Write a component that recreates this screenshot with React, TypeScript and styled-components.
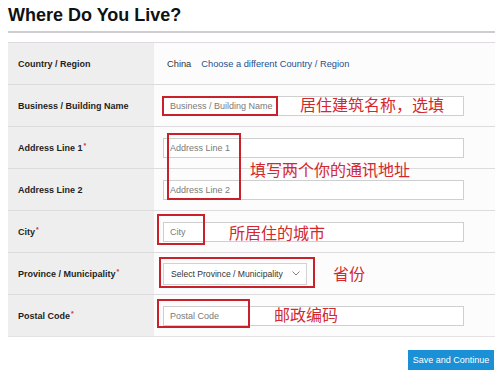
import React from 'react'
import styled, { createGlobalStyle } from 'styled-components'

const GlobalStyle = createGlobalStyle`
  html, body {
    margin: 0;
    padding: 0;
    background: #ffffff;
  }
  body {
    font-family: 'Liberation Sans', Arial, sans-serif;
    color: #222;
  }
`

const Page = styled.div`
  position: relative;
  width: 487px;
  height: 373px;
  padding-left: 8px;
  overflow: hidden;
`
const Title = styled.h1`
  margin: 4px 0 0;
  padding-bottom: 5px;
  font-size: 18px;
  line-height: 22px;
  font-weight: 700;
  color: #111;
  border-bottom: 2px solid #cfcdcf;
`
const Table = styled.div`
  margin-top: 9px;
  display: flex;
  flex-direction: column;
  border-bottom: 1px solid #e4e2e4;
`
const Row = styled.div`
  display: grid;
  grid-template-columns: 146px 1fr;
  height: 42px;
  border-top: 1px solid #dddbdd;
  box-sizing: border-box;
`
const LabelCell = styled.div`
  background: #efeeef;
  display: flex;
  align-items: center;
  padding-left: 10px;
  font-size: 9px;
  font-weight: 700;
  color: #1e1e1e;
`
const Req = styled.span`
  color: #d0363b;
  font-size: 7px;
  align-self: flex-start;
  margin-top: 15px;
  margin-left: 1px;
`
const ValueCell = styled.div<{ $pad?: number }>`
  background: #fdfcfd;
  display: flex;
  align-items: center;
  gap: 10px;
  padding-left: ${(p) => p.$pad ?? 9}px;
  font-size: 9.3px;
`
const Plain = styled.span`
  color: #333;
`
const Link = styled.a`
  color: #24508f;
  text-decoration: none;
`
const Field = styled.input`
  box-sizing: border-box;
  width: 301px;
  height: 20px;
  border: 1px solid #cfcfcf;
  background: #fff;
  padding: 0 6px;
  font-family: 'Liberation Sans', Arial, sans-serif;
  font-size: 9px;
  color: #333;
  outline: none;

  &::placeholder {
    color: #7a7a7a;
  }
`
const SelectBox = styled.div`
  box-sizing: border-box;
  width: 144px;
  height: 22px;
  border: 1px solid #d2d2d2;
  background: #fff;
  display: flex;
  align-items: center;
  justify-content: space-between;
  padding: 0 6px 0 7px;
  font-size: 8.6px;
  color: #333;
  white-space: nowrap;
`
const Footer = styled.div`
  display: flex;
  justify-content: flex-end;
  padding-top: 13px;
  padding-right: 1px;
`
const SaveButton = styled.button`
  height: 20px;
  width: 86px;
  border: none;
  background: #1a90d6;
  color: #fff;
  font-family: 'Liberation Sans', Arial, sans-serif;
  font-size: 9px;
  padding: 0;
`
const Mark = styled.div<{ $x: number; $y: number; $w: number; $h: number }>`
  position: absolute;
  left: ${(p) => p.$x}px;
  top: ${(p) => p.$y}px;
  width: ${(p) => p.$w}px;
  height: ${(p) => p.$h}px;
  box-sizing: border-box;
  border: 2px solid #c9202a;
  pointer-events: none;
`
const Note = styled.div<{ $x: number; $y: number }>`
  position: absolute;
  left: ${(p) => p.$x}px;
  top: ${(p) => p.$y}px;
  font-family: 'Noto Sans CJK SC', sans-serif;
  font-size: 16px;
  line-height: 18px;
  color: #d4282f;
  white-space: nowrap;
  pointer-events: none;
`

const marks = [
  { x: 162, y: 96, w: 116, h: 20 },
  { x: 167, y: 133, w: 74, h: 67 },
  { x: 157, y: 214, w: 48, h: 31 },
  { x: 159, y: 257, w: 156, h: 31 },
  { x: 157, y: 299, w: 93, h: 29 },
]

const notes = [
  { x: 300, y: 95, text: '居住建筑名称，选填' },
  { x: 250, y: 160, text: '填写两个你的通讯地址' },
  { x: 229, y: 223, text: '所居住的城市' },
  { x: 333, y: 264, text: '省份' },
  { x: 274, y: 305, text: '邮政编码' },
]

const Chevron = () => (
  <svg width='8' height='5' viewBox='0 0 8 5'>
    <path d='M0.5 0.5 L4 4 L7.5 0.5' fill='none' stroke='#777' strokeWidth='0.9' />
  </svg>
)

const Label = ({ text, required }: { text: string; required?: boolean }) => (
  <LabelCell>
    {text}
    {required && <Req>*</Req>}
  </LabelCell>
)

export default function App() {
  return (
    <>
      <GlobalStyle />
      <Page>
        <Title>Where Do You Live?</Title>
        <Table>
          <Row>
            <Label text='Country / Region' />
            <ValueCell $pad={13}>
              <Plain>China</Plain>
              <Link>Choose a different Country / Region</Link>
            </ValueCell>
          </Row>
          <Row>
            <Label text='Business / Building Name' />
            <ValueCell>
              <Field placeholder='Business / Building Name' />
            </ValueCell>
          </Row>
          <Row>
            <Label text='Address Line 1' required />
            <ValueCell>
              <Field placeholder='Address Line 1' />
            </ValueCell>
          </Row>
          <Row>
            <Label text='Address Line 2' />
            <ValueCell>
              <Field placeholder='Address Line 2' />
            </ValueCell>
          </Row>
          <Row>
            <Label text='City' required />
            <ValueCell>
              <Field placeholder='City' />
            </ValueCell>
          </Row>
          <Row>
            <Label text='Province / Municipality' required />
            <ValueCell>
              <SelectBox>
                <span>Select Province / Municipality</span>
                <Chevron />
              </SelectBox>
            </ValueCell>
          </Row>
          <Row>
            <Label text='Postal Code' required />
            <ValueCell>
              <Field placeholder='Postal Code' />
            </ValueCell>
          </Row>
        </Table>
        <Footer>
          <SaveButton>Save and Continue</SaveButton>
        </Footer>
        {marks.map((m, i) => (
          <Mark key={i} $x={m.x} $y={m.y} $w={m.w} $h={m.h} />
        ))}
        {notes.map((n, i) => (
          <Note key={i} $x={n.x} $y={n.y}>
            {n.text}
          </Note>
        ))}
      </Page>
    </>
  )
}
